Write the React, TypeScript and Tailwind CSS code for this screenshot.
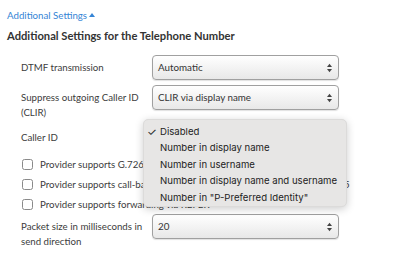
import React from "react";

function Arrows() {
  return (
    <svg width="7" height="10" viewBox="0 0 7 10" className="absolute right-[5px] top-1/2 -translate-y-1/2">
      <path d="M3.5 0.8 L6 4 L1 4 Z" fill="#444" />
      <path d="M3.5 9.2 L6 6 L1 6 Z" fill="#444" />
    </svg>
  );
}

function Select({ value }: { value: string }) {
  return (
    <div className="relative w-[187px] h-[25px] rounded-[4px] border border-[#a0a0a0] bg-gradient-to-b from-[#ffffff] to-[#e8e8e8] shadow-[0_1px_1px_rgba(0,0,0,0.12)] flex items-center pl-[5px] text-[9.8px] text-[#333]">
      {value}
      <Arrows />
    </div>
  );
}

function Checkbox({ label }: { label: string }) {
  return (
    <div className="h-[20px] flex items-center pl-[15px] whitespace-nowrap">
      <div className="w-[11px] h-[11px] rounded-[2.5px] border border-[#8a8a8a] bg-white shrink-0" />
      <span className="ml-[7px] text-[9.7px] text-[#3c3c3c]">{label}</span>
    </div>
  );
}

export default function App() {
  const items = [
    "Disabled",
    "Number in display name",
    "Number in username",
    "Number in display name and username",
    'Number in "P-Preferred Identity"',
  ];
  return (
    <div className="relative w-[399px] h-[255px] overflow-hidden bg-white text-[#3c3c3c]" style={{ fontFamily: "Lato, 'Open Sans', sans-serif" }}>
      <div className="pl-[7px] pt-[7px]">
        <div className="text-[9.7px] leading-[16px] text-[#3585d6] flex items-center">
          Additional Settings
          <svg width="6" height="4" viewBox="0 0 6 4" className="ml-[2px]">
            <path d="M3 0 L6 4 L0 4 Z" fill="#3585d6" />
          </svg>
        </div>
        <div className="mt-[5px] text-[11.2px] leading-[16px] font-bold text-[#333]">
          Additional Settings for the Telephone Number
        </div>
        <div className="pl-[14px] mt-[11px]">
          <div className="flex">
            <div className="w-[131px] text-[9.7px] leading-[15px] pt-[5px]">DTMF transmission</div>
            <Select value="Automatic" />
          </div>
          <div className="flex mt-[5px]">
            <div className="w-[131px] text-[9.7px] leading-[15px] pt-[5px]">Suppress outgoing Caller ID (CLIR)</div>
            <Select value="CLIR via display name" />
          </div>
          <div className="flex mt-[5px]">
            <div className="w-[131px] text-[9.7px] leading-[15px] pt-[5px]">Caller ID</div>
            <Select value="Disabled" />
          </div>
        </div>
        <div className="mt-[4px]">
          <Checkbox label="Provider supports G.726 according to RFC 3551" />
          <Checkbox label="Provider supports call-back on busy (CCBS) in accordance with RFC 4235" />
          <Checkbox label="Provider supports forwarding via REFER" />
        </div>
        <div className="pl-[14px] flex">
          <div className="w-[131px] text-[9.7px] leading-[15px] pt-[5px]">Packet size in milliseconds in send direction</div>
          <Select value="20" />
        </div>
      </div>
      <div
        className="absolute left-[143px] top-[119px] w-[204px] h-[88px] rounded-[5px] bg-[#e7e6e5] shadow-[0_2px_8px_rgba(0,0,0,0.2)] border border-[#dcdbda] pt-[4px] text-[9.6px] text-[#222]"
        style={{ fontFamily: "Inter, 'Liberation Sans', sans-serif" }}
      >
        {items.map((t, i) => (
          <div key={t} className="relative h-[16.4px] leading-[16.4px] pl-[16px] whitespace-nowrap">
            {i === 0 && <span className="absolute left-[3px] text-[11px]">✓</span>}
            {t}
          </div>
        ))}
      </div>
    </div>
  );
}
